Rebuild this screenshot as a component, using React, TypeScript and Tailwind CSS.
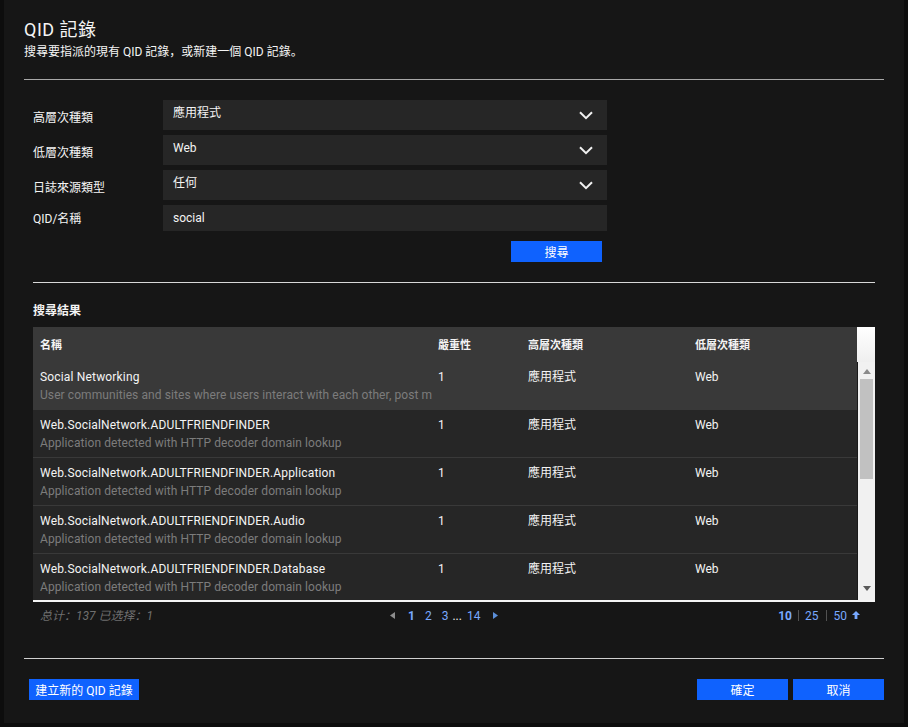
import React from "react";

const font = { fontFamily: '"Roboto","Noto Sans CJK SC",sans-serif' };

function Chevron() {
  return (
    <svg width="14" height="9" viewBox="0 0 14 9" fill="none" className="shrink-0">
      <path d="M1 1.2 L7 7.2 L13 1.2" stroke="#f0f0f0" strokeWidth="2" />
    </svg>
  );
}

function SelectRow({ label, value }: { label: string; value: string }) {
  return (
    <div className="flex h-[30px] mb-[5px]">
      <div className="w-[130px] pt-[10px] text-[12px] leading-[16px] text-[#f4f4f4]">{label}</div>
      <div className="w-[444px] bg-[#262626] flex justify-between pl-[10px] pr-[14px]">
        <span className="text-[12px] leading-[16px] pt-[5px] text-[#f4f4f4]">{value}</span>
        <div className="pt-[11px]"><Chevron /></div>
      </div>
    </div>
  );
}

const rows = [
  ["Social Networking", "User communities and sites where users interact with each other, post m"],
  ["Web.SocialNetwork.ADULTFRIENDFINDER", "Application detected with HTTP decoder domain lookup"],
  ["Web.SocialNetwork.ADULTFRIENDFINDER.Application", "Application detected with HTTP decoder domain lookup"],
  ["Web.SocialNetwork.ADULTFRIENDFINDER.Audio", "Application detected with HTTP decoder domain lookup"],
  ["Web.SocialNetwork.ADULTFRIENDFINDER.Database", "Application detected with HTTP decoder domain lookup"],
];

function Row({ name, desc, index }: { name: string; desc: string; index: number }) {
  const selected = index === 0;
  return (
    <div className={`flex pl-[7px] pt-[7px] ${selected ? "bg-[#393939] border-b border-[#393939]" : "bg-[#262626] border-b border-[#393939]"} ${index === 4 ? "h-[46px] border-b-0" : "h-[48px]"}`}>
      <div className="w-[398px] shrink-0 overflow-hidden whitespace-nowrap">
        <div className="text-[12px] leading-[16px] text-[#f4f4f4] tracking-[0.17px]">{name}</div>
        <div className="mt-[1px] text-[12px] leading-[18px] text-[#7c7c7c] tracking-[0.08px]">{desc}</div>
      </div>
      <div className="w-[90px] text-[12px] leading-[16px] text-[#f4f4f4]">1</div>
      <div className="w-[167px] text-[12px] leading-[16px] text-[#f4f4f4]">應用程式</div>
      <div className="text-[12px] leading-[16px] text-[#f4f4f4]">Web</div>
    </div>
  );
}

function Scrollbar() {
  return (
    <div className="w-[18px] shrink-0 flex flex-col">
      <div className="h-[35px] bg-gradient-to-b from-white to-[#efefef]" />
      <div className="flex-1 bg-[#f1f1f1] flex flex-col items-center border-l-[1px] border-[#1a1a1a] px-[2px]">
        <svg width="8" height="5" viewBox="0 0 8 5" className="mt-[7px]"><path d="M4 0 L8 5 L0 5 Z" fill="#8a8a8a" /></svg>
        <div className="w-[13px] h-[100px] bg-[#c1c1c1] mt-[5px]" />
        <svg width="8" height="5" viewBox="0 0 8 5" className="mt-[107px]"><path d="M0 0 L8 0 L4 5 Z" fill="#5a5a5a" /></svg>
      </div>
    </div>
  );
}

export default function App() {
  return (
    <div style={font} className="w-[908px] h-[727px] bg-[#0d0d0d] pl-[4px] pr-[4px] overflow-hidden">
      <div className="w-[900px] h-[723px] bg-[#161616] pl-[20px] pr-[20px] pt-[19px]">
        <h1 className="text-[18px] leading-[21px] text-[#f4f4f4] font-normal tracking-[0.5px]">QID 記錄</h1>
        <p className="text-[12px] leading-[16px] mt-[4px] text-[#f4f4f4]">搜尋要指派的現有 QID 記錄，或新建一個 QID 記錄。</p>
        <div className="h-px bg-[#a8a8a8] mt-[19px]" />

        <div className="mt-[20px] ml-[9px]">
          <SelectRow label="高層次種類" value="應用程式" />
          <SelectRow label="低層次種類" value="Web" />
          <SelectRow label="日誌來源類型" value="任何" />
          <div className="flex h-[26px]">
            <div className="w-[130px] pt-[6px] text-[12px] leading-[16px] text-[#f4f4f4]">QID/名稱</div>
            <div className="w-[444px] bg-[#262626] pl-[10px] pt-[5px] text-[12px] leading-[16px] text-[#f4f4f4]">social</div>
          </div>
          <div className="flex justify-end w-[569px] mt-[10px]">
            <div className="w-[91px] h-[21px] bg-[#0f62fe] text-white text-[12px] leading-[24px] text-center">搜尋</div>
          </div>
        </div>

        <div className="h-px bg-[#d8d8d8] mt-[20px] ml-[9px] mr-[9px]" />
        <div className="ml-[9px] mt-[20px] text-[12px] leading-[16px] font-bold text-[#f4f4f4]">搜尋結果</div>

        <div className="ml-[9px] w-[842px] mt-[8px] flex h-[273px]">
          <div className="w-[824px]">
            <div className="flex h-[35px] bg-[#393939] pl-[7px] pt-[11px] text-[11px] leading-[16px] font-bold text-[#f4f4f4]">
              <div className="w-[398px]">名稱</div>
              <div className="w-[90px]">嚴重性</div>
              <div className="w-[167px]">高層次種類</div>
              <div>低層次種類</div>
            </div>
            {rows.map((r, i) => (
              <Row key={r[0]} name={r[0]} desc={r[1]} index={i} />
            ))}
          </div>
          <Scrollbar />
        </div>
        <div className="ml-[9px] w-[842px] h-[2px] bg-[#f4f4f4]" />

        <div className="ml-[9px] w-[842px] flex items-center h-[27px] text-[12px] leading-[16px]">
          <div className="w-[357px] pl-[7px] italic text-[#6f6f6f]">总计：137 已选择：1</div>
          <div className="flex items-center text-[#78a9ff]">
            <svg width="5" height="7" viewBox="0 0 5 7"><path d="M5 0 V7 L0 3.5 Z" fill="#8d8d8d" /></svg>
            <span className="ml-[13px] font-bold">1</span>
            <span className="ml-[10px]">2</span>
            <span className="ml-[10px]">3</span>
            <span className="ml-[4px] text-[#f4f4f4]">...</span>
            <span className="ml-[5px]">14</span>
            <svg width="5" height="7" viewBox="0 0 5 7" className="ml-[13px]"><path d="M0 0 V7 L5 3.5 Z" fill="#5b8fd9" /></svg>
          </div>
          <div className="flex items-center ml-auto mr-[15px] text-[#78a9ff]">
            <span className="font-bold">10</span>
            <span className="mx-[6px] w-px h-[11px] bg-[#525252]" />
            <span>25</span>
            <span className="mx-[7px] w-px h-[11px] bg-[#525252]" />
            <span>50</span>
            <svg width="8" height="8" viewBox="0 0 8 8" className="ml-[5px] mb-[2px]"><path d="M4 0 L8 4 H5.4 V8 H2.6 V4 H0 Z" fill="#78a9ff" /></svg>
          </div>
        </div>

        <div className="h-px bg-[#d0d0d0] mt-[29px]" />

        <div className="flex mt-[20px] ml-[5px] text-white text-[12px]">
          <div className="w-[110px] h-[21px] bg-[#0f62fe] leading-[24px] text-center">建立新的 QID 記錄</div>
          <div className="w-[91px] h-[21px] bg-[#0f62fe] leading-[24px] text-center ml-auto">確定</div>
          <div className="w-[91px] h-[21px] bg-[#0f62fe] leading-[24px] text-center ml-[5px]">取消</div>
        </div>
      </div>
    </div>
  );
}
